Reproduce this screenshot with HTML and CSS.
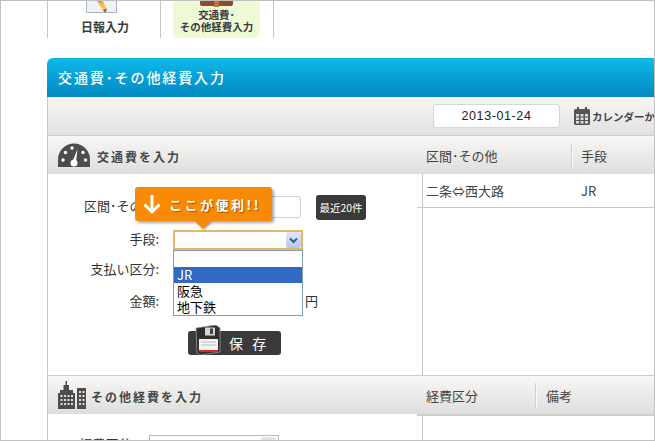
FILE: index.html
```html
<!DOCTYPE html>
<html lang="ja">
<head>
<meta charset="utf-8">
<title>交通費･その他経費入力</title>
<link rel="stylesheet" href="styles.css">
</head>
<body>
<div class="frame">
  <nav class="tabs">
    <a class="tab">
      <span class="tab-icon tab-icon-first">
        <svg width="31" height="13" viewBox="0 0 31 13"><path d="M.5 0V11.500H30.500V0" fill="#eef1f5" stroke="#a9b2bd"/><path d="M11 0L17 9.500 20 11.500 20.500 7.500 17 0Z" fill="#f2c14e"/><path d="M17 9.500L20 11.500 20.500 7.500Z" fill="#6b5a3a"/><path d="M11 0H15L17 3Z" fill="#e0892a"/></svg>
      </span>
      <span class="tab-label tab-label-first">日報入力</span>
    </a>
    <a class="tab tab-active">
      <span class="tab-inner">
        <span class="tab-icon tab-icon-small">
          <svg width="33" height="6" viewBox="0 0 33 6"><path d="M0 0H33V3Q33 5 31 5H2Q0 5 0 3Z" fill="#8d4a2c"/><rect x="14" y="0" width="5" height="6" fill="#b8743e"/></svg>
        </span>
        <span class="tab-label tab-label-small">交通費･<br>その他経費入力</span>
      </span>
    </a>
  </nav>

  <main class="panel">
    <h1 class="panel-title">交通費･その他経費入力</h1>
    <div class="toolbar">
      <div class="date-box">2013-01-24</div>
      <svg class="cal-icon" width="16" height="18" viewBox="0 0 16 18"><rect x="0" y="2" width="16" height="16" rx="1.500" fill="#555"/><rect x="3" y="0" width="2" height="4" fill="#555"/><rect x="11" y="0" width="2" height="4" fill="#555"/><path d="M2 7h3v2.500H2zM6.500 7h3v2.500h-3zM11 7h3v2.500h-3zM2 10.500h3v2.500H2zM6.500 10.500h3v2.500h-3zM11 10.500h3v2.500h-3zM2 14h3v2.500H2zM6.500 14h3v2.500h-3zM11 14h3v2.500h-3z" fill="#ddd"/></svg>
      <span class="cal-link">カレンダーから選択</span>
    </div>

    <section class="section">
      <header class="section-head">
        <div class="section-title">
          <svg class="gauge" width="32" height="24" viewBox="0 0 32 24">
            <path d="M0 24V17A16 16.500 0 0 1 32 17V24Z" fill="#4d4d4d"/>
            <circle cx="16" cy="20" r="3.500" fill="#fff"/>
            <path d="M14.800 18L19.500 6 18 19Z" fill="#fff"/>
            <circle cx="5" cy="17" r="1.700" fill="#fff"/><circle cx="7.500" cy="9.500" r="1.700" fill="#fff"/><circle cx="14" cy="5" r="1.700" fill="#fff"/><circle cx="25" cy="9.500" r="1.700" fill="#fff"/><circle cx="27.500" cy="17" r="1.700" fill="#fff"/>
          </svg>
          <span class="section-text">交通費を入力</span>
        </div>
        <div class="col-heads col-heads-first">
          <span class="col-a">区間･その他</span>
          <span class="col-b">手段</span>
        </div>
      </header>
      <div class="section-body section-body-first">
        <form class="form">
          <div class="form-row">
            <label class="form-label">区間･その他:</label>
            <div class="text-input"></div>
            <button class="recent" type="button">最近20件</button>
          </div>
          <div class="form-row">
            <label class="form-label">手段:</label>
            <div class="select select-focus"><span class="select-btn"><svg width="9" height="7" viewBox="0 0 9 7"><path d="M1 1.500L4.500 5 8 1.500" fill="none" stroke="#3f5a8a" stroke-width="2"/></svg></span></div>
          </div>
          <div class="form-row form-row-tight">
            <label class="form-label">支払い区分:</label>
            <div class="select"></div>
          </div>
          <div class="form-row">
            <label class="form-label">金額:</label>
            <div class="text-input text-input-money"></div>
            <span class="unit">円</span>
          </div>
          <button class="save" type="button">
            <svg class="floppy" width="26" height="30" viewBox="0 0 26 30">
              <path d="M1 3L21 0 25 3 25 27 5 30 2 28Z" fill="#2f2f2f" stroke="#999" stroke-width=".8"/>
              <rect x="10" y="2.500" width="10" height="8" fill="#d6d6d6"/>
              <rect x="15" y="3.500" width="3" height="5.500" fill="#444"/>
              <path d="M4 14H23V25H4Z" fill="#f4f4f4"/>
              <path d="M4 25H23V27H4Z" fill="#d8262a"/>
              <path d="M6 17H21M6 20H21" stroke="#bbb" stroke-width="1"/>
            </svg>
            <span>保 存</span>
          </button>
        </form>

        <div class="list-col">
          <div class="list-row">
            <span class="col-a">二条⇔西大路</span>
            <span class="col-b col-b-cell">JR</span>
          </div>
        </div>

        <div class="tooltip">
          <svg width="20" height="22" viewBox="0 0 20 22"><path d="M10 2V19M2.500 11.500L10 19 17.500 11.500" fill="none" stroke="#fff" stroke-width="3"/></svg>
          <span>ここが便利!!</span>
        </div>
        <ul class="dropdown">
          <li class="option"></li>
          <li class="option option-on">JR</li>
          <li class="option">阪急</li>
          <li class="option">地下鉄</li>
        </ul>
      </div>
    </section>

    <section class="section section-second">
      <header class="section-head">
        <div class="section-title section-title-second">
          <svg class="building" width="28" height="28" viewBox="0 0 28 28">
            <path d="M0 28V12H2V9H5.500V4H7.500V0H9V4H11V9H15V12H17V28Z" fill="#4d4d4d"/>
            <rect x="19" y="7" width="9" height="21" fill="#4d4d4d"/>
            <path d="M2.500 14h2v2h-2zM6 14h2v2H6zM9.500 14h2v2h-2zM13 14h2v2h-2zM2.500 18h2v2h-2zM6 18h2v2H6zM9.500 18h2v2h-2zM13 18h2v2h-2zM2.500 22h2v2h-2zM6 22h2v2H6zM9.500 22h2v2h-2zM13 22h2v2h-2zM21 10h2v2h-2zM24.500 10h2v2h-2zM21 14h2v2h-2zM24.500 14h2v2h-2zM21 18h2v2h-2zM24.500 18h2v2h-2zM21 22h2v2h-2zM24.500 22h2v2h-2z" fill="#ddd"/>
          </svg>
          <span class="section-text">その他経費を入力</span>
        </div>
        <div class="col-heads col-heads-second">
          <span class="col-c">経費区分</span>
          <span class="col-d">備考</span>
        </div>
      </header>
      <div class="section-body">
        <form class="form form-second">
          <div class="form-row form-row-second">
            <label class="form-label form-label-second">経費区分:</label>
            <div class="select select-second"><span class="select-btn select-btn-second"></span></div>
          </div>
        </form>
        <div class="list-col">
          <div class="list-rule"></div>
        </div>
      </div>
    </section>
  </main>
</div>
</body>
</html>
```

FILE: styles.css
```css
* { box-sizing: border-box; }

html, body { margin: 0; padding: 0; background: #fff; }

body {
  font-family: "Noto Sans CJK JP", "Liberation Sans", sans-serif;
  font-size: 13px;
  color: #333;
}

.frame {
  width: 655px;
  height: 441px;
  border: 1px solid #c0c0c0;
  padding-left: 46px;
  overflow: hidden;
}

/* tabs */
.tabs { display: flex; height: 37px; }

.tab {
  width: 113px;
  height: 37px;
  border-left: 1px solid #c8c8c8;
  display: flex;
  flex-direction: column;
  align-items: center;
}

.tab-active {
  width: 114px;
  border-right: 1px solid #c8c8c8;
  padding: 0 12px;
  align-items: flex-start;
}

.tab-inner {
  display: flex;
  flex-direction: column;
  align-items: center;
  width: 87px;
  height: 37px;
  background: #eefad6;
  border-radius: 0 0 5px 5px;
}

.tab-icon { display: block; height: 13px; line-height: 0; }
.tab-icon-first { margin-right: 5px; }
.tab-icon-small { height: 7px; }

.tab-label {
  margin-top: 5px;
  font-size: 12px;
  font-weight: 700;
  line-height: 16px;
  color: #3c3c3c;
}
.tab-label-first { margin-left: 2px; }
.tab-label-small {
  margin-top: 1px;
  font-size: 10.500px;
  line-height: 12px;
  text-align: center;
  white-space: nowrap;
}

/* panel */
.panel {
  margin-top: 20px;
  width: 607px;
}

.panel-title {
  margin: 0;
  height: 39px;
  padding-left: 11px;
  border-radius: 6px 0 0 0;
  background: linear-gradient(#0db9e9, #0388c1);
  color: #fff;
  font-size: 14px;
  font-weight: 500;
  line-height: 38px;
  letter-spacing: 1.900px;
}

.toolbar {
  height: 39px;
  border-left: 1px solid #c8c8c8;
  border-bottom: 1px solid #cdcdcd;
  background: linear-gradient(#f8f7f5, #e0e0e0);
  display: flex;
  align-items: center;
  padding-left: 385px;
  white-space: nowrap;
  overflow: hidden;
}

.date-box {
  flex: none;
  width: 127px;
  height: 24px;
  background: #fff;
  border: 1px solid #d6d6d6;
  border-radius: 3px;
  font-family: "Liberation Sans", sans-serif;
  font-size: 12.500px;
  letter-spacing: .6px;
  line-height: 22px;
  text-align: center;
  color: #222;
}

.cal-icon { flex: none; margin-left: 14px; }

.cal-link {
  margin-left: 2px;
  font-size: 10.500px;
  font-weight: 700;
  color: #444;
}

/* sections */
.section { border-left: 1px solid #c8c8c8; }

.section-second { border-top: 1px solid #cdcdcd; }

.section-head {
  display: grid;
  grid-template-columns: 374px 1fr;
  height: 38px;
  background: linear-gradient(#f8f7f5, #dedede);
}

.section-title {
  display: flex;
  align-items: center;
  padding-left: 10px;
  font-size: 12px;
  font-weight: 700;
  letter-spacing: 2px;
  color: #474747;
}
.section-text { padding-top: 2px; }
.gauge { margin-right: 7px; flex: none; }
.building { margin-right: 5px; flex: none; }

.col-heads {
  display: flex;
  align-items: center;
  color: #444;
  font-size: 13px;
  white-space: nowrap;
}

.col-a { width: 150px; padding-left: 4px; flex: none; }
.col-b { padding-left: 8px; height: 25px; line-height: 25px; flex: none; }
.col-heads .col-b { border-left: 1px solid #fafafa; box-shadow: -1px 0 0 #cfcfcf; }
.col-b-cell { padding-left: 9px; height: auto; line-height: inherit; }

.col-c { width: 114px; padding-left: 4px; flex: none; }
.col-d { padding-left: 9px; height: 25px; line-height: 25px; border-left: 1px solid #fafafa; box-shadow: -1px 0 0 #cfcfcf; flex: none; }

.section-body {
  position: relative;
  display: grid;
  grid-template-columns: 374px 1fr;
  height: 201px;
}

.list-col {
  border-left: 1px solid #c8c8c8;
  height: 100%;
}

.list-row {
  height: 34px;
  margin-left: -6px;
  padding-left: 5px;
  border-bottom: 1px solid #c8c8c8;
  display: flex;
  align-items: center;
  color: #444;
  font-size: 13px;
}

.list-rule {
  margin-left: -6px;
  border-top: 2px solid #cdcdcd;
}

/* form */
.form {
  padding-top: 22px;
  position: relative;
}

.form-row {
  display: flex;
  align-items: center;
  height: 22px;
  margin-bottom: 11px;
}
.form-row-tight { margin-top: -3px; margin-bottom: 10px; }

.form-label {
  flex: none;
  width: 125px;
  padding: 0 14px 4px 0;
  text-align: right;
  font-size: 13px;
  color: #333;
  white-space: nowrap;
}

.text-input {
  flex: none;
  width: 128px;
  height: 22px;
  border: 1px solid #d0d0d0;
  border-radius: 3px;
  background: #fff;
}
.text-input-money { width: 129px; }

.recent {
  flex: none;
  margin-left: 15px;
  width: 50px;
  height: 25px;
  padding: 0;
  border: 0;
  border-radius: 3px;
  background: #3a3a3a;
  color: #fff;
  font-family: inherit;
  font-size: 10.500px;
  font-weight: 400;
  white-space: nowrap;
}

.select {
  flex: none;
  width: 130px;
  height: 20px;
  border: 1px solid #b8b8b8;
  background: #fff;
  padding: 1px;
  display: flex;
  justify-content: flex-end;
}
.select-focus { border: 2px solid #e4b868; padding: 0; }

.select-btn {
  width: 15px;
  height: 16px;
  background: linear-gradient(#dde8fb, #b4c9f2);
  border-radius: 2px;
  display: flex;
  align-items: center;
  justify-content: center;
}

.unit { margin-left: 3px; padding-bottom: 4px; font-size: 13px; color: #333; }

.save {
  display: flex;
  align-items: center;
  position: relative;
  margin: 18px 0 0 140px;
  width: 93px;
  height: 24px;
  padding: 0 0 0 41px;
  border: 0;
  border-radius: 3px;
  background: #3a3a3a;
  color: #fff;
  font-family: inherit;
  font-size: 14px;
  letter-spacing: 3px;
  white-space: pre;
}

.floppy { position: absolute; left: 7px; top: -6px; }

/* overlays */
.tooltip {
  position: absolute;
  left: 87px;
  top: 13px;
  width: 137px;
  height: 34px;
  border-radius: 3px;
  background: #f98a06;
  box-shadow: 2px 2px 3px rgba(0, 0, 0, .35);
  color: #fff;
  font-size: 13px;
  font-weight: 700;
  letter-spacing: 2.500px;
  text-shadow: 1px 1px 1px rgba(90, 50, 0, .6);
  display: flex;
  align-items: center;
  gap: 7px;
  padding-left: 7px;
  white-space: nowrap;
}
.tooltip::after {
  content: "";
  position: absolute;
  left: 60px;
  top: 34px;
  border-style: solid;
  border-width: 8px 8px 0;
  border-color: #f98a06 transparent transparent;
  filter: drop-shadow(1px 1px 1px rgba(0, 0, 0, .4));
}

.dropdown {
  position: absolute;
  left: 125px;
  top: 76px;
  width: 130px;
  margin: 0;
  padding: 0;
  list-style: none;
  background: #fff;
  border: 1px solid #7f9db9;
}

.option {
  height: 16px;
  line-height: 16px;
  padding-left: 3px;
  font-size: 13px;
  color: #000;
}
.option-on { background: #316ac5; color: #fff; }

/* second section form */
.form-second { padding-top: 20px; }
.form-row-second { margin: 0; }
.form-label-second { width: 101px; }
.select-second { width: 130px; }
.select-btn-second { margin-right: 1px; }
```
